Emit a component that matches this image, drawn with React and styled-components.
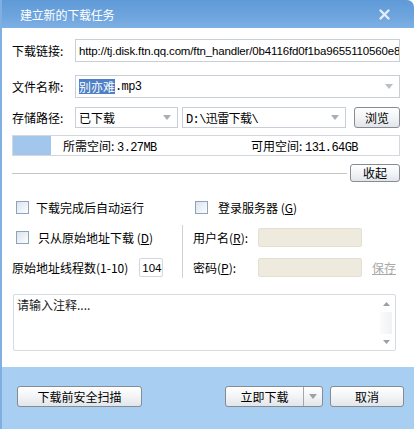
import React from 'react'
import styled, { createGlobalStyle } from 'styled-components'

const GlobalStyle = createGlobalStyle`
  html, body {
    margin: 0;
    padding: 0;
    background: #fff;
  }
  body {
    font-family: "Noto Sans CJK SC", "Liberation Sans", sans-serif;
    font-size: 12px;
    color: #000;
  }
`;

const Arrow = ({ color = '#a6aeb7' }) => (
  <svg width="8" height="5" viewBox="0 0 8 5">
    <path d="M0 0 H8 L4 5 Z" fill={color} />
  </svg>
);

const App = () => {
  return (
    <>
      <GlobalStyle />
      <Window>
        <TitleBar>
          <Title>建立新的下载任务</Title>
          <svg width="11" height="11" viewBox="0 0 11 11">
            <path d="M1.5 1.5 L9.5 9.5 M9.5 1.5 L1.5 9.5" stroke="#e4eef9" strokeWidth="2.4" strokeLinecap="round" />
          </svg>
        </TitleBar>

        <Body>
          <Row top={11} h={23}>
            <Label>下载链接:</Label>
            <Field>
              <Url>http://tj.disk.ftn.qq.com/ftn_handler/0b4116fd0f1ba9655110560e8c2</Url>
            </Field>
          </Row>

          <Row top={13} h={23}>
            <Label>文件名称:</Label>
            <Field>
              <Selected>别亦难</Selected>
              <Mono>.mp3</Mono>
              <Spacer />
              <Arrow color="#b9c0c8" />
            </Field>
          </Row>

          <Row top={9} h={21}>
            <Label>存储路径:</Label>
            <Field w={103} grow={0}>
              <span>已下载</span>
              <Spacer />
              <Arrow />
            </Field>
            <Field w={164} grow={0} left={4}>
              <Mono>D:\迅雷下载\</Mono>
              <Spacer />
              <Arrow />
            </Field>
            <Button w={46} h={21} left={8}>浏览</Button>
          </Row>

          <SpaceBar>
            <SpaceFill />
            <SpaceText w={188}>所需空间: <Mono>3.27MB</Mono></SpaceText>
            <SpaceText>可用空间: <Mono>131.64GB</Mono></SpaceText>
          </SpaceBar>

          <CollapseRow>
            <Rule />
            <Button w={50} h={18} left={3}>收起</Button>
          </CollapseRow>

          <Options>
            <OptionCol>
              <OptRow>
                <CheckBox left={4} />
                <OptText left={7}>下载完成后自动运行</OptText>
              </OptRow>
              <OptRow>
                <CheckBox left={4} />
                <OptText left={9}>只从原始地址下载 (<u>D</u>)</OptText>
              </OptRow>
              <OptRow h={31}>
                <OptText>原始地址线程数(1-10)</OptText>
                <SmallInput>1048</SmallInput>
              </OptRow>
            </OptionCol>
            <Divider />
            <OptionCol>
              <OptRow>
                <CheckBox left={2} />
                <OptText left={10}>登录服务器 (<u>G</u>)</OptText>
              </OptRow>
              <OptRow>
                <OptLabel>用户名(<u>R</u>):</OptLabel>
                <Disabled />
              </OptRow>
              <OptRow h={31}>
                <OptLabel>密码(<u>P</u>):</OptLabel>
                <Disabled />
                <SaveLink>保存</SaveLink>
              </OptRow>
            </OptionCol>
          </Options>

          <Notes>
            <NoteText>请输入注释....</NoteText>
            <ScrollBar>
              <svg width="7" height="4" viewBox="0 0 7 4"><path d="M0 4 L3.5 0 L7 4 Z" fill="#9aa0a6" /></svg>
              <ScrollTrack />
              <svg width="7" height="4" viewBox="0 0 7 4"><path d="M0 0 H7 L3.5 4 Z" fill="#9aa0a6" /></svg>
            </ScrollBar>
          </Notes>
        </Body>

        <Footer>
          <Button w={125} h={21}>下载前安全扫描</Button>
          <Spacer />
          <SplitButton>
            <SplitMain>立即下载</SplitMain>
            <SplitArrow><Arrow color="#9aa2ab" /></SplitArrow>
          </SplitButton>
          <Button w={74} h={21} left={7}>取消</Button>
        </Footer>
      </Window>
    </>
  )
}

const Window = styled.div`
  width: 414px;
  height: 429px;
  display: flex;
  flex-direction: column;
  border-left: 2px solid #80afe2;
  box-sizing: border-box;
  background: #fff;
`;

const TitleBar = styled.div`
  height: 28px;
  flex-shrink: 0;
  display: flex;
  align-items: center;
  justify-content: space-between;
  padding: 0 24px 0 18px;
  background: linear-gradient(180deg, #5f9ad7 0%, #6ea5de 60%, #7eb0e4 100%);
  border-top-right-radius: 7px;
`;

const Title = styled.span`
  color: #fff;
  font-size: 12px;
  letter-spacing: -0.2px;
`;

const Body = styled.div`
  flex: 1;
  padding: 0 14px 0 10px;
  display: flex;
  flex-direction: column;
`;

const Row = styled.div`
  display: flex;
  align-items: center;
  height: ${p => p.h}px;
  margin-top: ${p => p.top}px;
`;

const Label = styled.span`
  width: 63px;
  flex-shrink: 0;
  font-size: 12px;
`;

const Field = styled.div`
  flex: ${p => (p.grow === 0 ? 'none' : 1)};
  width: ${p => (p.w ? `${p.w}px` : 'auto')};
  min-width: 0;
  height: 100%;
  margin-left: ${p => p.left || 0}px;
  box-sizing: border-box;
  border: 1px solid #c8cfd6;
  background: #fff;
  display: flex;
  align-items: center;
  padding: 0 6px 0 3px;
  overflow: hidden;
  white-space: nowrap;
`;

const Url = styled.span`
  font-family: "Liberation Sans", sans-serif;
  font-size: 11.5px;
  letter-spacing: -0.15px;
`;

const Selected = styled.span`
  background: #4d80c6;
  color: #fff;
  font-size: 12px;
  line-height: 15px;
`;

const Mono = styled.span`
  font-family: "Liberation Mono", "Noto Sans CJK SC", monospace;
  font-size: 12px;
  letter-spacing: -0.6px;
`;

const Spacer = styled.div`
  flex: 1;
`;

const Button = styled.button`
  width: ${p => p.w}px;
  height: ${p => p.h}px;
  margin-left: ${p => p.left || 0}px;
  flex-shrink: 0;
  padding: 0;
  box-sizing: border-box;
  border: 1px solid #868c94;
  border-radius: 3px;
  background: linear-gradient(180deg, #ffffff 0%, #f3f4f6 50%, #e2e5e9 100%);
  font-family: "Noto Sans CJK SC", sans-serif;
  font-size: 12px;
  color: #000;
  line-height: 1;
`;

const SpaceBar = styled.div`
  margin-top: 7px;
  height: 21px;
  box-sizing: border-box;
  border: 1px solid #d3d8de;
  display: flex;
  align-items: center;
`;

const SpaceFill = styled.div`
  width: 38px;
  height: 100%;
  background: #a3c7ec;
  margin-right: 12px;
`;

const SpaceText = styled.span`
  width: ${p => (p.w ? `${p.w}px` : 'auto')};
  font-size: 12px;
`;

const CollapseRow = styled.div`
  margin-top: 8px;
  height: 18px;
  display: flex;
  align-items: center;
`;

const Rule = styled.div`
  flex: 1;
  height: 1px;
  background: #c6c6c6;
`;

const Options = styled.div`
  margin-top: 10px;
  display: flex;
`;

const OptionCol = styled.div`
  display: flex;
  flex-direction: column;
  &:first-child {
    width: 170px;
  }
`;

const Divider = styled.div`
  width: 1px;
  height: 53px;
  margin: 33px 10px 0 0;
  background: #d0d0d0;
  flex-shrink: 0;
`;

const OptRow = styled.div`
  height: ${p => p.h || 30}px;
  display: flex;
  align-items: center;
  white-space: nowrap;
`;

const CheckBox = styled.span`
  width: 13px;
  height: 13px;
  margin-left: ${p => p.left || 0}px;
  box-sizing: border-box;
  border: 1px solid #8da2bb;
  background: linear-gradient(135deg, #dce3ec 0%, #f3f6f9 70%, #ffffff 100%);
  flex-shrink: 0;
`;

const OptText = styled.span`
  margin-left: ${p => p.left || 0}px;
  font-size: 12px;
`;

const OptLabel = styled.span`
  width: 65px;
  font-size: 12px;
`;

const SmallInput = styled.div`
  margin-left: 11px;
  width: 24px;
  height: 19px;
  box-sizing: border-box;
  border: 1px solid #d2d7dc;
  border-radius: 2px;
  font-family: "Liberation Sans", sans-serif;
  font-size: 11.5px;
  overflow: hidden;
  padding-left: 2px;
  display: flex;
  align-items: center;
`;

const Disabled = styled.div`
  width: 104px;
  height: 19px;
  box-sizing: border-box;
  border: 1px solid #e3e0d2;
  border-radius: 2px;
  background: #eeebde;
`;

const SaveLink = styled.span`
  margin-left: 10px;
  color: #a8a8a8;
  text-decoration: underline;
  font-size: 12px;
`;

const Notes = styled.div`
  margin: 11px 4px 0 1px;
  height: 57px;
  box-sizing: border-box;
  border: 1px solid #d6dbe1;
  border-radius: 2px;
  display: flex;
`;

const NoteText = styled.span`
  flex: 1;
  padding: 1px 0 0 3px;
  font-size: 12px;
  color: #222;
`;

const ScrollBar = styled.div`
  width: 14px;
  margin-right: 2px;
  display: flex;
  flex-direction: column;
  align-items: center;
  padding: 7px 0 6px;
  box-sizing: border-box;
`;

const ScrollTrack = styled.div`
  flex: 1;
  width: 12px;
  margin: 6px 0;
  background: linear-gradient(90deg, #fbfbfb, #f1f2f3);
`;

const Footer = styled.div`
  height: 62px;
  flex-shrink: 0;
  background: #a8cff2;
  display: flex;
  align-items: flex-start;
  padding: 19px 10px 0 15px;
  box-sizing: border-box;
`;

const SplitButton = styled.div`
  display: flex;
  width: 98px;
  height: 21px;
  box-sizing: border-box;
  border: 1px solid #868c94;
  border-radius: 3px;
  background: linear-gradient(180deg, #ffffff 0%, #f3f4f6 50%, #e2e5e9 100%);
  overflow: hidden;
`;

const SplitMain = styled.span`
  flex: 1;
  display: flex;
  align-items: center;
  justify-content: center;
  font-size: 12px;
  border-right: 1px solid #a2a8af;
`;

const SplitArrow = styled.span`
  width: 18px;
  display: flex;
  align-items: center;
  justify-content: center;
`;

export default App
